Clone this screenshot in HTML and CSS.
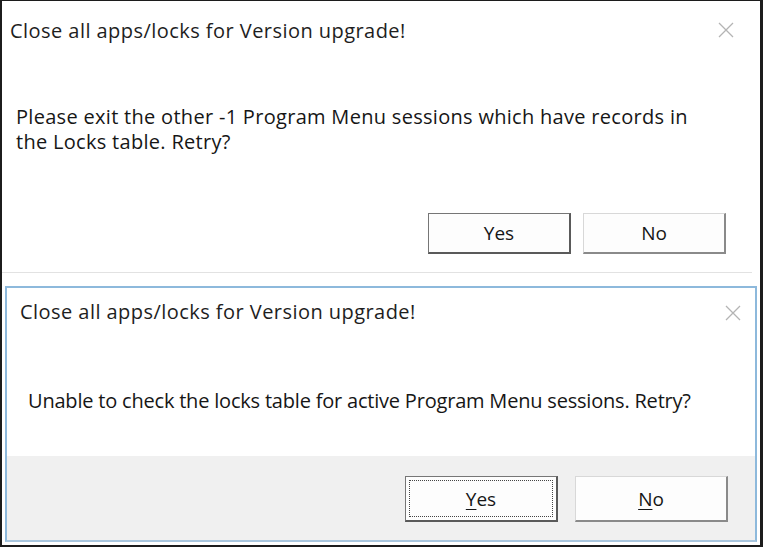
FILE: index.html
```html
<!DOCTYPE html>
<html>
<head>
<meta charset="utf-8">
<link rel="stylesheet" href="styles.css">
</head>
<body>
<div class="frame">
  <section class="dlg1">
    <header class="head head1">
      <span class="title">Close all apps/locks for Version upgrade!</span>
      <svg class="x" width="16" height="16" viewBox="0 0 16 16"><path d="M1 1L15 15M15 1L1 15" stroke="#b4b4b4" stroke-width="1.3" fill="none"/></svg>
    </header>
    <p class="msg msg1">Please exit the other -1 Program Menu sessions which have records in<br>the Locks table. Retry?</p>
    <div class="btns btns1">
      <button class="btn def">Yes</button>
      <button class="btn">No</button>
    </div>
  </section>
  <div class="sep"></div>
  <section class="dlg2">
    <div class="body2">
      <header class="head head2">
        <span class="title">Close all apps/locks for Version upgrade!</span>
        <svg class="x" width="16" height="16" viewBox="0 0 16 16"><path d="M1 1L15 15M15 1L1 15" stroke="#b4b4b4" stroke-width="1.3" fill="none"/></svg>
      </header>
      <p class="msg msg2">Unable to check the locks table for active Program Menu sessions. Retry?</p>
    </div>
    <footer class="foot">
      <button class="btn btn2 def focus"><span class="fr"><u>Y</u>es</span></button>
      <button class="btn btn2"><u>N</u>o</button>
    </footer>
  </section>
</div>
</body>
</html>
```

FILE: styles.css
```css
* { box-sizing: border-box; }
html, body { margin: 0; padding: 0; background: #fff; }
.frame {
  width: 763px;
  height: 547px;
  border: 1px solid #1c1c1c;
  border-width: 1px 3px 2px 2px;
  background: #fff;
  display: flex;
  flex-direction: column;
  font-family: "Open Sans", "Noto Sans", sans-serif;
  color: #161616;
  overflow: hidden;
}
.dlg1 {
  height: 271px;
  display: flex;
  flex-direction: column;
}
.head {
  display: flex;
  justify-content: space-between;
  align-items: flex-start;
}
.title {
  font-size: 20px;
  line-height: 26px;
  color: #1e1e1e;
  letter-spacing: 0.45px;
  white-space: nowrap;
}
.head1 { padding: 17px 26px 0 8px; }
.head1 .x { margin-top: 4px; }
.msg {
  margin: 0;
  font-size: 20px;
  line-height: 25px;
  color: #161616;
  white-space: nowrap;
}
.msg1 { margin-top: 60px; padding-left: 14px; letter-spacing: 0.3px; }
.btns {
  display: flex;
  justify-content: flex-end;
  gap: 12px;
}
.btns1 { margin-top: 59px; padding-right: 34px; }
.btn {
  font-family: inherit;
  font-size: 19px;
  color: #161616;
  background: #fdfdfd;
  border: 1px solid #d8d8d8;
  border-right: 2px solid #8a8a8a;
  border-bottom: 2px solid #8a8a8a;
  width: 143px;
  height: 41px;
  padding: 0;
  display: flex;
  align-items: center;
  justify-content: center;
}
.btn.def {
  border: 1px solid #767676;
  border-right: 2px solid #5a5a5a;
  border-bottom: 2px solid #5a5a5a;
}
.sep {
  height: 1px;
  background: #e2e2e2;
  margin-right: 8px;
}
.dlg2 {
  flex: 1;
  margin: 13px 3px 3px 3px;
  border: 2px solid #8db9dc;
  border-bottom-color: #a9c6de;
  display: flex;
  flex-direction: column;
}
.body2 {
  background: #fff;
  height: 168px;
}
.head2 { padding: 11px 14px 0 13px; }
.head2 .x { margin-top: 6px; }
.msg2 { margin-top: 63px; padding-left: 21px; letter-spacing: -0.2px; }
.foot {
  flex: 1;
  background: #f0f0f0;
  display: flex;
  justify-content: flex-end;
  align-items: flex-start;
  gap: 17px;
  padding: 20px 27px 0 0;
}
.btn2 {
  width: 153px;
  height: 46px;
}
.btn2 u { text-decoration-thickness: 1px; text-underline-offset: 3px; }
.btn.focus { padding: 3px; }
.fr {
  width: 100%;
  height: 100%;
  border: 1px dotted #444;
  display: flex;
  align-items: center;
  justify-content: center;
}
```
